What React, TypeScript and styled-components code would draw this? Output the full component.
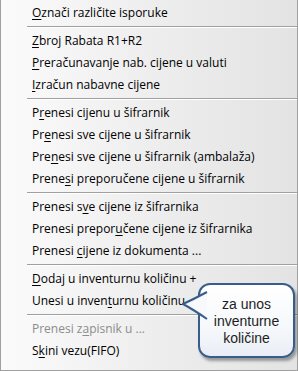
import styled, { createGlobalStyle } from 'styled-components';

const GlobalStyle = createGlobalStyle`
  html, body {
    margin: 0;
    padding: 0;
    background: #ffffff;
  }
  #root {
    width: 298px;
    height: 371px;
  }
`;

type Item = {
    label: string;
    key: number;
    disabled?: boolean;
};

const groups: Item[][] = [
    [{ label: 'Označi različite isporuke', key: 0 }],
    [
        { label: 'Zbroj Rabata R1+R2', key: 0 },
        { label: 'Preračunavanje nab. cijene u valuti', key: 0 },
        { label: 'Izračun nabavne cijene', key: 0 },
    ],
    [
        { label: 'Prenesi cijenu u šifrarnik', key: 1 },
        { label: 'Prenesi sve cijene u šifrarnik', key: 2 },
        { label: 'Prenesi sve cijene u šifrarnik (ambalaža)', key: 3 },
        { label: 'Prenesi preporučene cijene u šifrarnik', key: 5 },
    ],
    [
        { label: 'Prenesi sve cijene iz šifrarnika', key: 9 },
        { label: 'Prenesi preporučene cijene iz šifrarnika', key: 14 },
        { label: 'Prenesi cijene iz dokumenta ...', key: 8 },
    ],
    [
        { label: 'Dodaj u inventurnu količinu +', key: 0 },
        { label: 'Unesi u inventurnu količinu', key: 13 },
    ],
    [
        { label: 'Prenesi zapisnik u ...', key: 9, disabled: true },
        { label: 'Skini vezu(FIFO)', key: 1 },
    ],
];

const MenuItem = ({ item }: { item: Item }) => {
    const { label, key } = item;
    return (
        <Row $disabled={item.disabled}>
            {label.slice(0, key)}
            <Accel>{label.charAt(key)}</Accel>
            {label.slice(key + 1)}
        </Row>
    );
};

const App = () => {
    return (
        <>
            <GlobalStyle />
            <Menu>
                {groups.map((group, gi) => (
                    <Group key={gi}>
                        {gi > 0 && <Separator />}
                        {group.map((item) => (
                            <MenuItem key={item.label} item={item} />
                        ))}
                    </Group>
                ))}
                <Callout>
                    <CalloutTail viewBox="0 0 26 30" width="26" height="30">
                        <path
                            d="M25 1 Q 12 8 1 13 Q 12 19 25 28"
                            fill="#f7f9fc"
                            stroke="#385d8a"
                            strokeWidth="2"
                            strokeLinejoin="round"
                        />
                    </CalloutTail>
                    <CalloutText>
                        za unos
                        <br />
                        inventurne
                        <br />
                        količine
                    </CalloutText>
                </Callout>
            </Menu>
        </>
    );
};

export default App;

const Menu = styled.div`
  position: relative;
  box-sizing: border-box;
  width: 298px;
  height: 371px;
  padding-top: 2px;
  border: 1px solid #a0a0a0;
  border-top: none;
  background: linear-gradient(to right, #fbfbfb 0%, #eeeeee 50%, #e3e3e3 100%);
  font-family: 'Open Sans', 'Noto Sans', sans-serif;
  font-size: 12px;
  color: #000000;
`;

const Group = styled.div`
  display: flex;
  flex-direction: column;
`;

const Row = styled.div<{ $disabled?: boolean }>`
  height: 22px;
  line-height: 22px;
  padding-left: 31px;
  white-space: nowrap;
  color: ${({ $disabled }) => ($disabled ? '#8c8c8c' : '#000000')};
`;

const Accel = styled.span`
  text-decoration: underline;
  text-underline-offset: 2px;
`;

const Separator = styled.div`
  margin: 2px 0 2px 26px;
  height: 1px;
  background: #a0a0a0;
  border-bottom: 1px solid #ffffff;
`;

const Callout = styled.div`
  position: absolute;
  left: 197px;
  top: 283px;
  width: 97px;
  height: 75px;
  box-sizing: border-box;
  border: 2px solid #385d8a;
  border-radius: 12px;
  background: linear-gradient(to bottom, #ffffff 0%, #f6f8fb 60%, #e9eef5 100%);
  box-shadow: 2px 3px 3px rgba(0, 0, 0, 0.35);
  display: flex;
  align-items: center;
  justify-content: center;
  padding-top: 2px;
`;

const CalloutTail = styled.svg`
  position: absolute;
  left: -18px;
  top: 6px;
  overflow: visible;
`;

const CalloutText = styled.div`
  font-family: 'Liberation Sans', Arial, sans-serif;
  font-size: 14px;
  line-height: 17px;
  color: #1e1e1e;
  text-align: center;
`;
